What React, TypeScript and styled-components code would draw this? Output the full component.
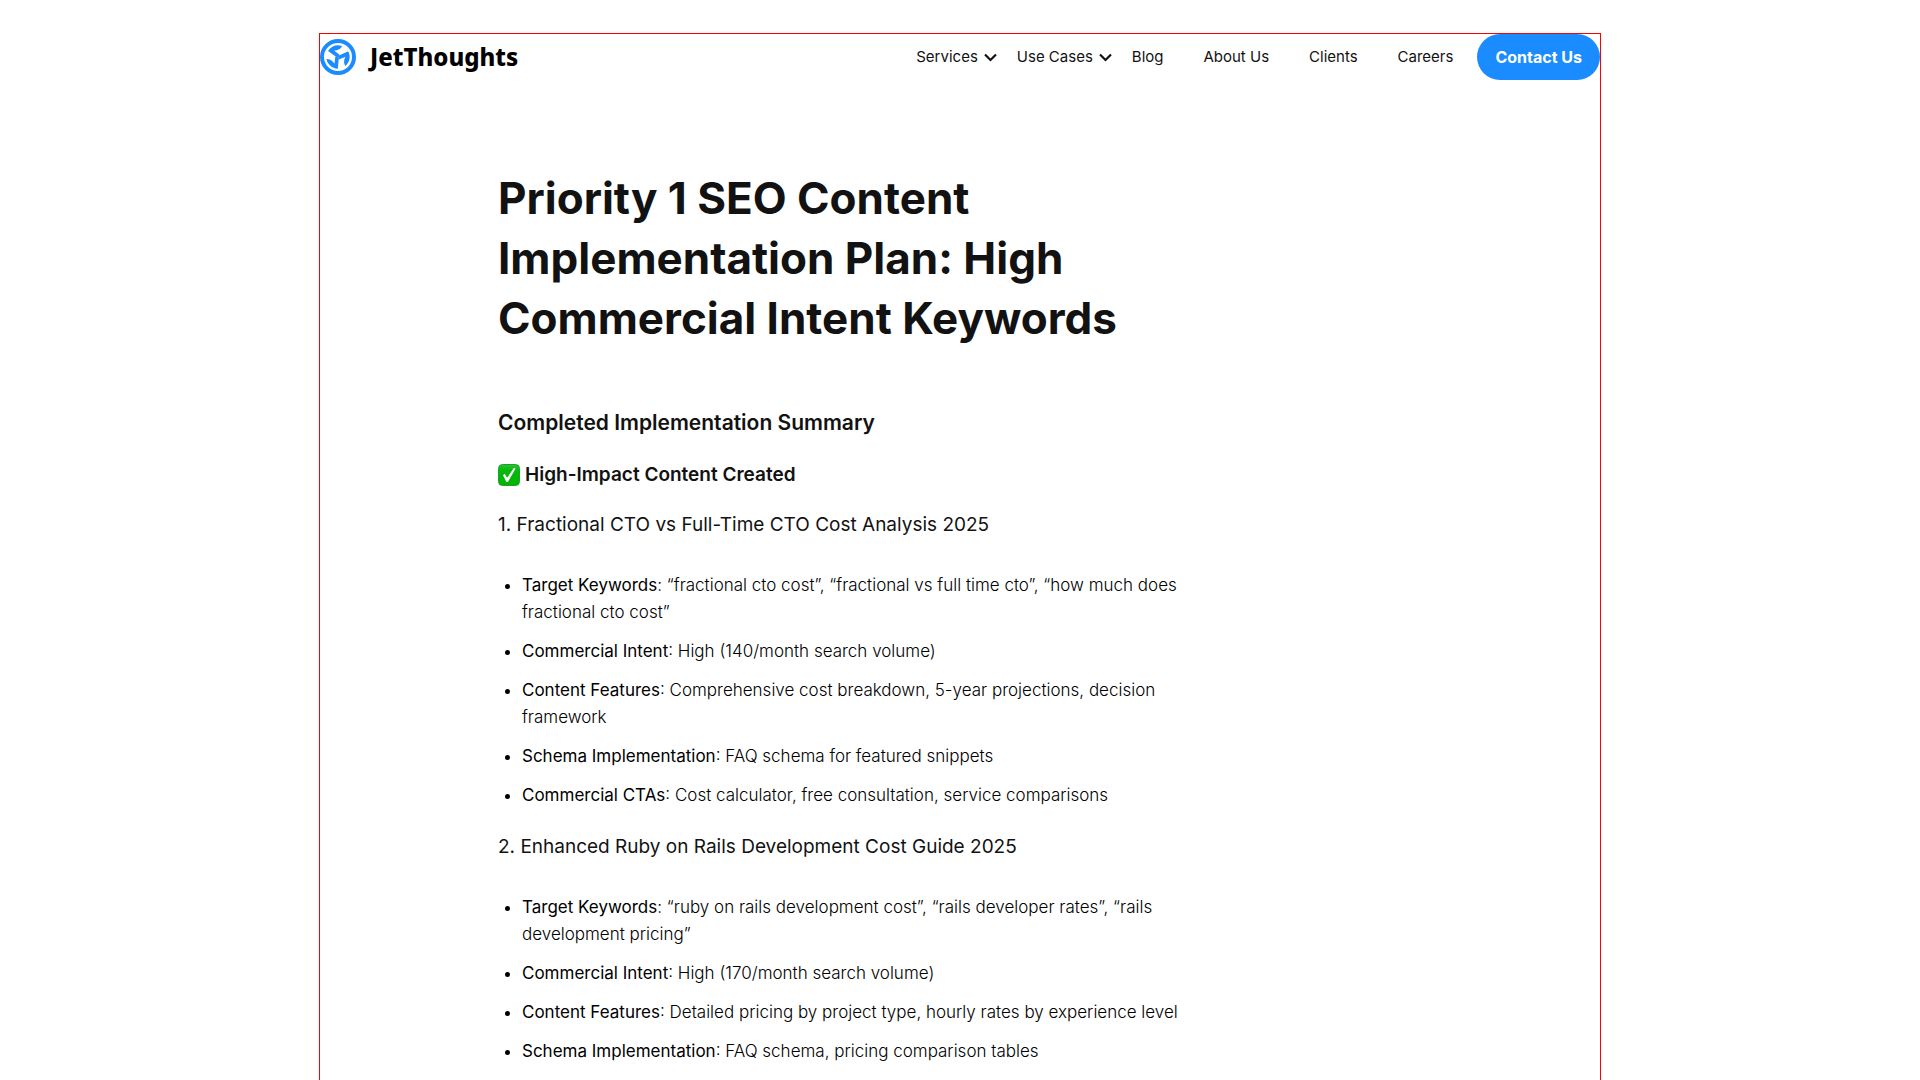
import React from "react";
import styled, { createGlobalStyle } from "styled-components";

const GlobalStyle = createGlobalStyle`
  *, *::before, *::after { box-sizing: border-box; }
  body {
    margin: 0;
    background: #fff;
    color: #121212;
    font-family: Inter, "Liberation Sans", sans-serif;
    font-size: 16px;
  }
`;

const Page = styled.div`
  width: calc(100% - 32px);
  max-width: 1280px;
  min-height: calc(100vh - 34px);
  margin: 34px auto 0;
  outline: 1px solid #f00;
`;

const Header = styled.header`
  display: flex;
  align-items: center;
  justify-content: space-between;
`;

const Brand = styled.a`
  display: flex;
  align-items: center;
  gap: 14px;
  color: #000;
  text-decoration: none;
  font: 800 24px/46px "Noto Sans", sans-serif;
`;

const Nav = styled.nav`
  display: flex;
  align-items: center;
`;

const NavItem = styled.a<{ $gap?: number }>`
  display: flex;
  align-items: center;
  gap: 6px;
  margin-right: ${({ $gap = 40 }) => $gap}px;
  color: #121212;
  font-size: 15px;
  line-height: 46px;
  text-decoration: none;
  white-space: nowrap;
`;

const Contact = styled.a`
  padding: 0 18px;
  border-radius: 23px;
  background: #1a8cff;
  color: #fff;
  font-size: 16px;
  font-weight: 700;
  line-height: 46px;
  text-decoration: none;
  white-space: nowrap;
`;

const Article = styled.article`
  max-width: 924px;
  margin: 0 auto;
  padding-top: 88px;
  padding-right: 240px;
`;

const Title = styled.h1`
  margin: 0;
  font-size: 44px;
  font-weight: 700;
  line-height: 60px;
`;

const Section = styled.h2`
  margin: 56px 0 0;
  font-size: 21px;
  font-weight: 600;
  line-height: 38px;
`;

const SubSection = styled.h3`
  display: flex;
  align-items: center;
  gap: 5px;
  margin: 18px 0 0;
  font-size: 19px;
  font-weight: 600;
  line-height: 30px;
`;

const Topic = styled.h4`
  margin: 20px 0 32px;
  font-size: 19px;
  font-weight: 400;
  line-height: 30px;
`;

const List = styled.ul`
  display: flex;
  flex-direction: column;
  gap: 12px;
  margin: 0 0 23px;
  padding: 0 0 0 24px;
`;

const Item = styled.li`
  color: #000;
  font-size: 17px;
  font-weight: 300;
  line-height: 27px;
`;

const Term = styled.strong`
  font-weight: 400;
`;

const blade = "M22 7C17 5.2 11 7 8 12L17.2 18.5L19.8 16L14 11.6C17 11.6 20.5 10.4 22 7z";

function Logo() {
  return (
    <svg width="36" height="36" viewBox="0 0 36 36" fill="#1a8cff" aria-hidden="true">
      <circle cx="18" cy="18" r="16" fill="none" stroke="#1a8cff" strokeWidth="4" />
      <path d={blade} />
      <path d={blade} transform="rotate(120 18 18)" />
      <path d={blade} transform="rotate(240 18 18)" />
    </svg>
  );
}

function Chevron() {
  return (
    <svg width="13" height="9" viewBox="0 0 13 9" aria-hidden="true">
      <path d="M1 1.5l5.5 5.5L12 1.5" fill="none" stroke="#121212" strokeWidth="2.2" />
    </svg>
  );
}

function CheckMark() {
  return (
    <svg width="22" height="22" viewBox="0 0 22 22" role="img" aria-label="Done">
      <defs>
        <linearGradient id="check-fill" x1="0" y1="0" x2="0" y2="1">
          <stop offset="0" stopColor="#2fc03c" />
          <stop offset="0.25" stopColor="#06bb0c" />
          <stop offset="1" stopColor="#00b400" />
        </linearGradient>
      </defs>
      <rect x="0.5" y="0.5" width="21" height="21" rx="4" fill="url(#check-fill)" stroke="#1fa02a" />
      <path d="M5 11.2l1.6-1.4 2.6 4L15.8 4l1.8.6L9.9 18H8.4z" fill="#fff" />
    </svg>
  );
}

const topics = [
  {
    title: "1. Fractional CTO vs Full-Time CTO Cost Analysis 2025",
    items: [
      ["Target Keywords", "“fractional cto cost”, “fractional vs full time cto”, “how much does fractional cto cost”"],
      ["Commercial Intent", "High (140/month search volume)"],
      ["Content Features", "Comprehensive cost breakdown, 5-year projections, decision framework"],
      ["Schema Implementation", "FAQ schema for featured snippets"],
      ["Commercial CTAs", "Cost calculator, free consultation, service comparisons"],
    ],
  },
  {
    title: "2. Enhanced Ruby on Rails Development Cost Guide 2025",
    items: [
      ["Target Keywords", "“ruby on rails development cost”, “rails developer rates”, “rails development pricing”"],
      ["Commercial Intent", "High (170/month search volume)"],
      ["Content Features", "Detailed pricing by project type, hourly rates by experience level"],
      ["Schema Implementation", "FAQ schema, pricing comparison tables"],
    ],
  },
];

export default function App() {
  return (
    <>
      <GlobalStyle />
      <Page>
        <Header>
          <Brand href="#"><Logo />JetThoughts</Brand>
          <Nav>
            <NavItem href="#services" $gap={20}>Services<Chevron /></NavItem>
            <NavItem href="#use-cases" $gap={20}>Use Cases<Chevron /></NavItem>
            <NavItem href="#blog">Blog</NavItem>
            <NavItem href="#about">About Us</NavItem>
            <NavItem href="#clients">Clients</NavItem>
            <NavItem href="#careers" $gap={24}>Careers</NavItem>
            <Contact href="#contact">Contact Us</Contact>
          </Nav>
        </Header>
        <Article>
          <Title>Priority 1 SEO Content Implementation Plan: High Commercial Intent Keywords</Title>
          <Section>Completed Implementation Summary</Section>
          <SubSection><CheckMark />High-Impact Content Created</SubSection>
          {topics.map((topic) => (
            <React.Fragment key={topic.title}>
              <Topic>{topic.title}</Topic>
              <List>
                {topic.items.map(([term, text]) => (
                  <Item key={term}><Term>{term}</Term>: {text}</Item>
                ))}
              </List>
            </React.Fragment>
          ))}
        </Article>
      </Page>
    </>
  );
}
